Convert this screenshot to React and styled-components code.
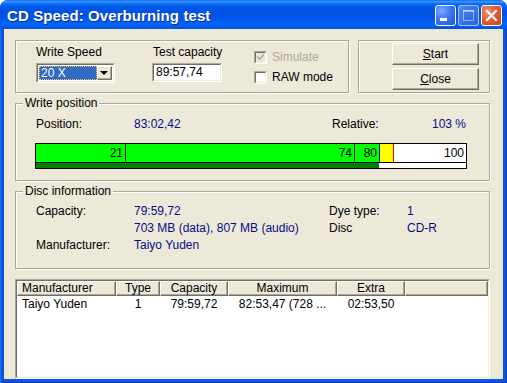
import React from "react";
import styled, { createGlobalStyle } from "styled-components";

const Global = createGlobalStyle`
  html, body { margin: 0; padding: 0; background: #fff; }
  body { font-family: "Liberation Sans", Arial, sans-serif; font-size: 12px; color: #000; }
  * { box-sizing: border-box; }
`;

const Window = styled.div`
  width: 507px;
  height: 383px;
  display: flex;
  flex-direction: column;
  border-radius: 8px 8px 0 0;
  overflow: hidden;
  background: #0a55e2;
`;

const TitleBar = styled.div`
  height: 29px;
  flex: none;
  display: flex;
  align-items: center;
  padding: 0 5px 0 7px;
  background: linear-gradient(
    to bottom,
    #0a5de8 0%,
    #3d95ff 4%,
    #2a8bff 8%,
    #0f74fa 12%,
    #0262ee 18%,
    #0057e5 26%,
    #0054e3 40%,
    #0056ea 60%,
    #005cf4 72%,
    #0365fb 82%,
    #0260f0 90%,
    #0352dc 100%
  );
`;

const Title = styled.div`
  flex: 1;
  color: #fff;
  font-family: "Liberation Sans", Arial, sans-serif;
  font-weight: bold;
  font-size: 15px;
  letter-spacing: 0.1px;
  text-shadow: 1px 1px 0 #0b2a8f;
  padding-top: 1px;
`;

const TitleButtons = styled.div`
  display: flex;
  gap: 2px;
  padding-top: 1px;
`;

const TitleButton = styled.div`
  width: 21px;
  height: 21px;
  border-radius: 3px;
  border: 1px solid ${(p) => (p.$disabled ? "rgba(255,255,255,0.55)" : "#fff")};
  display: flex;
  align-items: center;
  justify-content: center;
  background: ${(p) =>
    p.$variant === "close"
      ? "radial-gradient(circle at 30% 30%, #f0936f 0%, #e25d35 45%, #c8421b 100%)"
      : p.$disabled
      ? "linear-gradient(135deg, #4f86f2 0%, #3570e8 60%, #2a62dc 100%)"
      : "radial-gradient(circle at 30% 25%, #7aa6ff 0%, #3c77f2 45%, #1f55d8 100%)"};
  svg { display: block; }
`;

const Frame = styled.div`
  flex: 1;
  display: flex;
  padding: 0 4px 4px 4px;
  background: #0a55e2;
  box-shadow: inset 1px 0 0 #2a6ff0, inset -1px 0 0 #0a3cb8, inset 0 -1px 0 #0a3cb8;
`;

const Client = styled.div`
  flex: 1;
  background: #ece9d8;
  display: flex;
  flex-direction: column;
  padding: 11px 13px 0 11px;
  gap: 10px;
`;

const TopRow = styled.div`
  display: flex;
  gap: 9px;
  height: 53px;
  flex: none;
`;

const Group = styled.div`
  border: 1px solid #aca899;
  box-shadow: inset 1px 1px 0 #fff, 1px 1px 0 #fff;
  flex: ${(p) => (p.$w ? "none" : "1")};
  width: ${(p) => (p.$w ? `${p.$w}px` : "auto")};
  height: ${(p) => (p.$h ? `${p.$h}px` : "auto")};
  display: flex;
  flex-direction: column;
`;

const Legend = styled.div`
  align-self: flex-start;
  margin: -8px 0 0 7px;
  padding: 0 2px;
  background: #ece9d8;
  line-height: 14px;
`;

const SettingsRow = styled.div`
  display: flex;
  padding: 4px 0 0 20px;
`;

const Field = styled.div`
  display: flex;
  flex-direction: column;
  gap: 4px;
  width: ${(p) => p.$w}px;
  margin-right: ${(p) => p.$mr || 0}px;
`;

const FieldLabel = styled.div`
  line-height: 14px;
  white-space: nowrap;
  padding-left: ${(p) => p.$pl || 0}px;
`;

const Combo = styled.div`
  width: 79px;
  height: 20px;
  display: flex;
  border: 1px solid;
  border-color: #aca899 #fff #fff #aca899;
  background: #fff;
`;

const ComboInner = styled.div`
  flex: 1;
  display: flex;
  padding: 1px;
  border: 1px solid;
  border-color: #716f64 #f1efe2 #f1efe2 #716f64;
`;

const ComboValue = styled.div`
  flex: 1;
  background: #316ac5;
  color: #fff;
  line-height: 14px;
  padding-left: 2px;
  outline: 1px dotted #e8c94a;
  outline-offset: -1px;
`;

const ComboButton = styled.div`
  width: 15px;
  background: #ece9d8;
  border: 1px solid;
  border-color: #fff #716f64 #716f64 #fff;
  box-shadow: inset -1px -1px 0 #aca899;
  display: flex;
  align-items: center;
  justify-content: center;
`;

const Arrow = styled.span`
  width: 0;
  height: 0;
  border-left: 4px solid transparent;
  border-right: 4px solid transparent;
  border-top: 4px solid #000;
  margin-left: -1px;
`;

const TextInput = styled.div`
  width: 70px;
  height: 19px;
  border: 1px solid;
  border-color: #aca899 #fff #fff #aca899;
  background: #fff;
`;

const TextInputInner = styled.div`
  height: 100%;
  border: 1px solid;
  border-color: #716f64 #f1efe2 #f1efe2 #716f64;
  line-height: 15px;
  padding-left: 2px;
`;

const Checks = styled.div`
  display: flex;
  flex-direction: column;
  margin-top: 2px;
`;

const CheckRow = styled.div`
  display: flex;
  align-items: center;
  height: 20px;
  gap: 5px;
  color: ${(p) => (p.$disabled ? "#aca899" : "#000")};
`;

const Box = styled.span`
  width: 13px;
  height: 13px;
  border: 1px solid;
  border-color: #aca899 #fff #fff #aca899;
  display: flex;
`;

const BoxInner = styled.span`
  flex: 1;
  border: 1px solid;
  border-color: #716f64 #f1efe2 #f1efe2 #716f64;
  background: ${(p) => (p.$disabled ? "#ece9d8" : "#fff")};
  display: flex;
  align-items: center;
  justify-content: center;
`;

const ButtonColumn = styled.div`
  display: flex;
  flex-direction: column;
  gap: 3px;
  padding: 2px 0 0 33px;
`;

const Button = styled.button`
  width: 87px;
  height: 22px;
  padding: 0;
  font: 12px "Liberation Sans", Arial, sans-serif;
  color: #000;
  background: #ece9d8;
  border: 1px solid;
  border-color: #fff #716f64 #716f64 #fff;
  box-shadow: inset -1px -1px 0 #aca899;
`;

const InfoGrid = styled.div`
  display: grid;
  grid-template-columns: ${(p) => p.$cols};
  grid-auto-rows: ${(p) => p.$row}px;
  align-items: center;
  padding: ${(p) => p.$pad};
`;

const Value = styled.span`
  color: #0a0a88;
`;

const Track = styled.div`
  width: 432px;
  margin: ${(p) => p.$m};
  border: 1px solid #000;
  display: flex;
  flex-direction: column;
`;

const Segments = styled.div`
  height: 19px;
  display: flex;
  border-bottom: 1px solid #000;
`;

const Segment = styled.div`
  width: ${(p) => (p.$w ? `${p.$w}px` : "auto")};
  flex: ${(p) => (p.$w ? "none" : "1")};
  background: ${(p) => p.$bg};
  border-right: ${(p) => (p.$edge ? `1px solid ${p.$edge}` : "none")};
  text-align: right;
  padding-right: 2px;
  line-height: 19px;
  font-size: 12px;
`;

const Band = styled.div`
  height: 5px;
  display: flex;
  background: #fff;
`;

const BandFill = styled.div`
  background: #008000;
  height: 100%;
`;

const ListOuter = styled.div`
  height: 100px;
  flex: none;
  border: 1px solid;
  border-color: #aca899 #fff #fff #aca899;
  display: flex;
`;

const ListInner = styled.div`
  flex: 1;
  border: 1px solid;
  border-color: #716f64 #f1efe2 #f1efe2 #716f64;
  background: #fff;
  display: flex;
  flex-direction: column;
`;

const ListRow = styled.div`
  display: flex;
  height: ${(p) => (p.$header ? 15 : 16)}px;
  background: ${(p) => (p.$header ? "#ece9d8" : "#fff")};
`;

const HeaderCell = styled.div`
  width: ${(p) => (p.$w ? `${p.$w}px` : "auto")};
  flex: ${(p) => (p.$w ? "none" : "1")};
  border: 1px solid;
  border-color: #fff #716f64 #716f64 #fff;
  box-shadow: inset -1px -1px 0 #aca899;
  line-height: 13px;
  text-align: ${(p) => p.$align || "center"};
  padding-left: ${(p) => (p.$align === "left" ? 4 : 0)}px;
  white-space: nowrap;
  overflow: hidden;
`;

const Cell = styled.div`
  width: ${(p) => (p.$w ? `${p.$w}px` : "auto")};
  flex: ${(p) => (p.$w ? "none" : "1")};
  line-height: 16px;
  text-align: ${(p) => p.$align || "center"};
  padding-left: ${(p) => (p.$align === "left" ? 5 : 0)}px;
  white-space: nowrap;
  overflow: hidden;
`;

const columns = [
  { key: "Manufacturer", w: 99, align: "left" },
  { key: "Type", w: 44 },
  { key: "Capacity", w: 68 },
  { key: "Maximum", w: 109 },
  { key: "Extra", w: 68 },
  { key: "", w: 0 },
];

const rows = [["Taiyo Yuden", "1", "79:59,72", "82:53,47 (728 ...", "02:53,50", ""]];

const segments = [
  { w: 90, bg: "#00ff00", edge: "#000", label: "21" },
  { w: 229, bg: "#00ff00", edge: "#000", label: "74" },
  { w: 25, bg: "#00ff00", edge: "#1010c0", label: "80" },
  { w: 14, bg: "#ffff00", edge: "#ff0000", label: "" },
  { w: 0, bg: "#ffffff", label: "100" },
];

function Check({ checked, disabled, children }) {
  return (
    <CheckRow $disabled={disabled}>
      <Box>
        <BoxInner $disabled={disabled}>
          {checked && (
            <svg width="7" height="7" viewBox="0 0 7 7">
              <path d="M0 2.5 L2.5 5 L7 0.5" stroke={disabled ? "#aca899" : "#000"} strokeWidth="1.6" fill="none" />
            </svg>
          )}
        </BoxInner>
      </Box>
      {children}
    </CheckRow>
  );
}

export default function App() {
  return (
    <>
      <Global />
      <Window>
        <TitleBar>
          <Title>CD Speed: Overburning test</Title>
          <TitleButtons>
            <TitleButton>
              <svg width="19" height="19" viewBox="0 0 19 19">
                <rect x="4" y="12" width="7" height="3" fill="#fff" />
              </svg>
            </TitleButton>
            <TitleButton $disabled>
              <svg width="19" height="19" viewBox="0 0 19 19">
                <rect x="4.5" y="4.5" width="10" height="10" fill="none" stroke="rgba(255,255,255,0.45)" />
                <rect x="4" y="4" width="11" height="2" fill="rgba(255,255,255,0.45)" />
              </svg>
            </TitleButton>
            <TitleButton $variant="close">
              <svg width="19" height="19" viewBox="0 0 19 19">
                <path d="M5 5 L14 14 M14 5 L5 14" stroke="#fff" strokeWidth="2.2" strokeLinecap="square" />
              </svg>
            </TitleButton>
          </TitleButtons>
        </TitleBar>
        <Frame>
          <Client>
            <TopRow>
              <Group>
                <SettingsRow>
                  <Field $w={80} $mr={36}>
                    <FieldLabel>Write Speed</FieldLabel>
                    <Combo>
                      <ComboInner>
                        <ComboValue>20 X</ComboValue>
                        <ComboButton>
                          <Arrow />
                        </ComboButton>
                      </ComboInner>
                    </Combo>
                  </Field>
                  <Field $w={70} $mr={32}>
                    <FieldLabel $pl={1}>Test capacity</FieldLabel>
                    <TextInput>
                      <TextInputInner>89:57,74</TextInputInner>
                    </TextInput>
                  </Field>
                  <Checks>
                    <Check checked disabled>Simulate</Check>
                    <Check>RAW mode</Check>
                  </Checks>
                </SettingsRow>
              </Group>
              <Group $w={132}>
                <ButtonColumn>
                  <Button>
                    <u>S</u>tart
                  </Button>
                  <Button>
                    <u>C</u>lose
                  </Button>
                </ButtonColumn>
              </Group>
            </TopRow>

            <Group $h={77}>
              <Legend>Write position</Legend>
              <InfoGrid $cols="98px 198px 100px auto" $row={16} $pad="6px 0 0 20px">
                <span>Position:</span>
                <Value>83:02,42</Value>
                <span>Relative:</span>
                <Value>103 %</Value>
              </InfoGrid>
              <Track $m="11px 0 0 19px">
                <Segments>
                  {segments.map((s, i) => (
                    <Segment key={i} $w={s.w} $bg={s.bg} $edge={s.edge}>
                      {s.label}
                    </Segment>
                  ))}
                </Segments>
                <Band>
                  <BandFill style={{ width: "343px" }} />
                </Band>
              </Track>
            </Group>

            <Group $h={73}>
              <Legend>Disc information</Legend>
              <InfoGrid $cols="98px 195px 78px auto" $row={17} $pad="4px 0 0 20px">
                <span>Capacity:</span>
                <Value>79:59,72</Value>
                <span>Dye type:</span>
                <Value>1</Value>
                <span />
                <Value>703 MB (data), 807 MB (audio)</Value>
                <span>Disc</span>
                <Value>CD-R</Value>
                <span>Manufacturer:</span>
                <Value>Taiyo Yuden</Value>
              </InfoGrid>
            </Group>

            <ListOuter>
              <ListInner>
                <ListRow $header>
                  {columns.map((c, i) => (
                    <HeaderCell key={i} $w={c.w} $align={c.align}>
                      {c.key}
                    </HeaderCell>
                  ))}
                </ListRow>
                {rows.map((r, ri) => (
                  <ListRow key={ri}>
                    {r.map((v, i) => (
                      <Cell key={i} $w={columns[i].w} $align={columns[i].align}>
                        {v}
                      </Cell>
                    ))}
                  </ListRow>
                ))}
              </ListInner>
            </ListOuter>
          </Client>
        </Frame>
      </Window>
    </>
  );
}
